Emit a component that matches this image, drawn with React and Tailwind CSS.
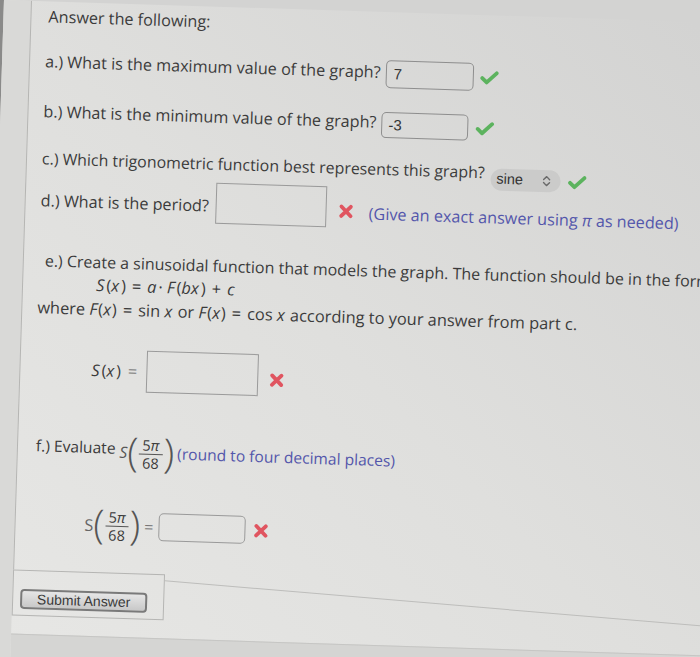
import React from "react";

const Check = () => (
  <svg width="19" height="15" viewBox="0 0 19 15" className="block">
    <path d="M2.5 8 L7 12.2 L16.8 2.8" fill="none" stroke="#5cb35e" strokeWidth="3.8" strokeLinecap="round" strokeLinejoin="round" />
  </svg>
);

const Cross = () => (
  <svg width="15" height="15" viewBox="0 0 15 15" className="block">
    <path d="M2.8 2.8 L12.2 12.2 M12.2 2.8 L2.8 12.2" stroke="#e05560" strokeWidth="3.8" strokeLinecap="round" />
  </svg>
);

const Chevrons = () => (
  <svg width="10" height="14" viewBox="0 0 10 14" className="block">
    <path d="M2 5.5 L5 2.5 L8 5.5 M2 8.5 L5 11.5 L8 8.5" fill="none" stroke="#6a6a6a" strokeWidth="1.4" strokeLinecap="round" strokeLinejoin="round" />
  </svg>
);

const Frac = () => (
  <span className="inline-flex items-center">
    <span className="text-[40px] font-extralight leading-none text-[#555] -mt-[4px]">(</span>
    <span className="inline-flex flex-col items-center text-[14.5px] leading-[17px] mx-[1px]">
      <span className="px-[3px]">5<i>π</i></span>
      <span className="self-stretch border-t border-[#555]"></span>
      <span className="px-[3px]">68</span>
    </span>
    <span className="text-[40px] font-extralight leading-none text-[#555] -mt-[4px]">)</span>
  </span>
);

export default function App() {
  return (
    <div className="w-[700px] h-[657px] overflow-hidden flex bg-[#d3d3d2] font-['Open_Sans',sans-serif] text-[#3b3b3b]">
      <div className="w-[4px] shrink-0 bg-[#8a8a89]" />
      <div className="relative flex-1">
        <div className="w-[750px] h-[730px] origin-top-left rotate-[1.8deg] flex bg-linear-to-bl from-[#d2d2d1] via-[#dfdfdd] to-[#e8e8e6]">
          <div className="w-[27px] shrink-0 bg-[#d9d9d7]" />
          <div className="flex-1 flex flex-col">
            <div className="border-l border-[#b5b5b3] pl-[15px] pb-[27px] flex flex-col text-[16.2px]">
              <div className="mt-[5px] h-[20px] flex items-center pl-[2px]">Answer the following:</div>

              <div className="mt-[23px] h-[28px] flex items-center">
                <span className="mb-[4px]">a.) What is the maximum value of the graph?</span>
                <div className="ml-[5px] w-[88px] h-[28px] border-[1.5px] border-[#8e8e8e] rounded-[5px] flex items-center pl-[7px] font-['Liberation_Sans',sans-serif] text-[15px] text-[#333]">7</div>
                <span className="ml-[6px]"><Check /></span>
              </div>

              <div className="mt-[24px] h-[26px] flex items-center">
                <span className="mb-[6px]">b.) What is the minimum value of the graph?</span>
                <div className="ml-[5px] w-[87px] h-[26px] border-[1.5px] border-[#8e8e8e] rounded-[5px] flex items-center pl-[6px] font-['Liberation_Sans',sans-serif] text-[15px] text-[#333]">-3</div>
                <span className="ml-[7px]"><Check /></span>
              </div>

              <div className="mt-[27px] h-[22px] flex items-center">
                <span className="mb-[12px] text-[15.9px]">c.) Which trigonometric function best represents this graph?</span>
                <div className="ml-[6px] w-[70px] h-[22px] rounded-full bg-[#cbcbca] flex items-center justify-between pl-[6px] pr-[9px] font-['Liberation_Sans',sans-serif] text-[14.5px] text-[#333]">
                  <span>sine</span>
                  <Chevrons />
                </div>
                <span className="ml-[7px]"><Check /></span>
              </div>

              <div className="mt-[1px] h-[41px] flex items-center">
                <span className="mt-[5px]">d.) What is the period?</span>
                <div className="ml-[7px] w-[111px] h-[41px] border-[1.5px] border-[#9a9a9a]" />
                <span className="ml-[12px] mt-[8px]"><Cross /></span>
                <span className="ml-[15px] mt-[12px] text-[#5356ab]">(Give an exact answer using <i>π</i> as needed)</span>
              </div>

              <div className="mt-[31px] h-[22px] flex items-center pl-[6px] whitespace-nowrap text-[16px]">e.) Create a sinusoidal function that models the graph. The function should be in the form</div>
              <div className="mt-[2px] h-[21px] flex items-center pl-[58px] whitespace-nowrap text-[16.4px]">
                <i className="pr-[2px]">S</i>(<i className="pr-[2px]">x</i>)<span className="mx-[6px]">=</span><i className="pr-[2px]">a</i>·<i className="ml-[4px] pr-[2px]">F</i>(<i className="pr-[2px]">bx</i>)<span className="mx-[6px]">+</span><i>c</i>
              </div>
              <div className="mt-[2px] h-[22px] flex items-center whitespace-nowrap text-[16.4px]">
                where&nbsp;<i className="pr-[1px]">F</i>(<i className="pr-[1px]">x</i>)<span className="mx-[6px]">=</span>sin&nbsp;<i className="pr-[1px]">x</i>&nbsp;or&nbsp;<i className="pr-[1px]">F</i>(<i className="pr-[1px]">x</i>)<span className="mx-[6px]">=</span>cos&nbsp;<i className="pr-[1px]">x</i>&nbsp;according to your answer from part c.
              </div>

              <div className="mt-[29px] h-[42px] flex items-center pl-[56px]">
                <span className="whitespace-nowrap"><i className="pr-[2px]">S</i>(<i className="pr-[2px]">x</i>)<span className="ml-[7px] text-[#777]">=</span></span>
                <div className="ml-[9px] w-[112px] h-[42px] border-[1.5px] border-[#9a9a9a]" />
                <span className="ml-[11px] mt-[9px]"><Cross /></span>
              </div>

              <div className="mt-[41px] h-[40px] flex items-center pl-[3px] whitespace-nowrap text-[15.6px]">
                <span className="mb-[8px]">f.) Evaluate&nbsp;</span>
                <i className="text-[#555]">S</i>
                <Frac />
                <span className="ml-[3px] text-[#5356ab]">(round to four decimal places)</span>
              </div>

              <div className="mt-[33px] h-[40px] flex items-center pl-[54px]">
                <span className="text-[#666]">S</span>
                <Frac />
                <span className="ml-[4px] text-[#777]">=</span>
                <div className="ml-[5px] w-[87px] h-[28px] border-[1.5px] border-[#9a9a9a] rounded-[5px]" />
                <span className="ml-[8px]"><Cross /></span>
              </div>
            </div>

            <div className="flex">
              <div className="w-[152px] shrink-0 border border-[#b5b5b3] pl-[7px] pt-[18px] pb-[6px]">
                <div className="w-[127px] h-[20px] rounded-[4px] border-2 border-[#7a7a7a] bg-linear-to-b from-[#e6e6e6] to-[#c8c8c8] flex items-center justify-center font-['Liberation_Sans',sans-serif] text-[14px] text-[#3a3a3a]">Submit Answer</div>
              </div>
              <div className="flex-1">
                <div className="mt-[6px] h-0 border-t border-[#bdbdbb] origin-left rotate-[3deg]" />
              </div>
            </div>

            <div className="mt-[18px] flex-1 border-t border-[#c6c6c4] bg-[#d5d5d3]" />
          </div>
        </div>
      </div>
    </div>
  );
}
